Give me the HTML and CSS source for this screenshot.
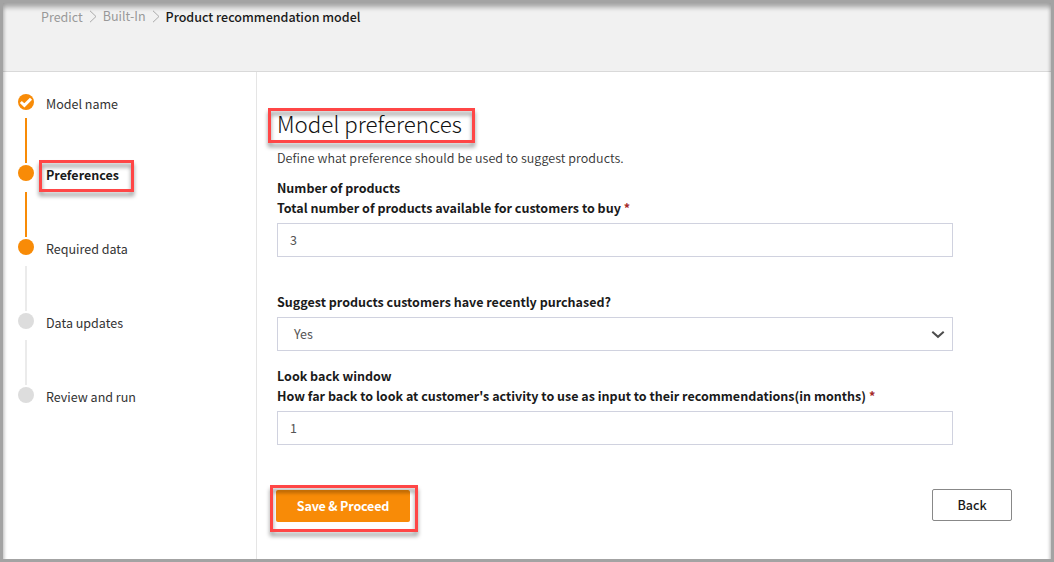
FILE: index.html
```html
<!DOCTYPE html>
<html lang="en">
<head>
<meta charset="utf-8">
<title>Product recommendation model</title>
<link rel="stylesheet" href="styles.css">
</head>
<body>
<div class="window">
  <header class="header">
    <nav class="breadcrumb">
      <a class="crumb crumb-root">Predict</a>
      <svg class="crumb-sep" width="8" height="13" viewBox="0 0 8 13"><path d="M1 .8 7 6.500 1 12.200"/></svg>
      <a class="crumb crumb-mid">Built-In</a>
      <svg class="crumb-sep" width="8" height="13" viewBox="0 0 8 13"><path d="M1 .8 7 6.500 1 12.200"/></svg>
      <span class="crumb-current">Product recommendation model</span>
    </nav>
  </header>
  <div class="body">
    <aside class="sidebar">
      <ol class="steps">
        <li class="step done first">
          <span class="rail"><span class="dot"><svg width="16" height="16" viewBox="0 0 16 16"><path d="M2.800 8 6.400 11.300 13 4.700"/></svg></span><span class="line"></span></span>
          <span class="label">Model name</span>
        </li>
        <li class="step done">
          <span class="rail"><span class="dot"></span><span class="line"></span></span>
          <span class="label current callout callout-step">Preferences</span>
        </li>
        <li class="step done pending-next">
          <span class="rail"><span class="dot"></span><span class="line"></span></span>
          <span class="label">Required data</span>
        </li>
        <li class="step">
          <span class="rail"><span class="dot"></span><span class="line"></span></span>
          <span class="label">Data updates</span>
        </li>
        <li class="step">
          <span class="rail"><span class="dot"></span></span>
          <span class="label">Review and run</span>
        </li>
      </ol>
    </aside>
    <main class="main">
      <h1 class="title"><span class="callout callout-title">Model preferences</span></h1>
      <p class="intro">Define what preference should be used to suggest products.</p>
      <section class="field">
        <div class="field-label">Number of products</div>
        <div class="field-label">Total number of products available for customers to buy <span class="required">*</span></div>
        <div class="input">3</div>
      </section>
      <section class="field field-select">
        <div class="field-label">Suggest products customers have recently purchased?</div>
        <div class="input select">Yes
          <svg class="chevron" width="14" height="9" viewBox="0 0 14 9"><path d="M1.300 1.700 7 6.800 12.700 1.700"/></svg>
        </div>
      </section>
      <section class="field field-window">
        <div class="field-label">Look back window</div>
        <div class="field-label">How far back to look at customer's activity to use as input to their recommendations(in months) <span class="required">*</span></div>
        <div class="input">1</div>
      </section>
      <div class="actions">
        <span class="callout callout-save"><button class="btn primary">Save &amp; Proceed</button></span>
        <button class="btn back">Back</button>
      </div>
    </main>
  </div>
</div>
</body>
</html>
```

FILE: styles.css
```css
*, *::before, *::after { box-sizing: border-box; }

body {
  margin: 0;
  background: #fff;
  color: #333;
  font: 12.53px/20px "Noto Sans CJK SC", "Open Sans", sans-serif;
}

.window {
  position: relative;
  display: flex;
  flex-direction: column;
  width: 1054px;
  height: 562px;
  border: 3px solid #a3a3a3;
  overflow: hidden;
}

/* Soft inner shadow of the window frame */
.window::after {
  content: "";
  position: absolute;
  inset: 0 0 -12px;
  box-shadow: inset 0 5px 4px rgba(0, 0, 0, .25), inset 0 0 4px rgba(0, 0, 0, .2);
  pointer-events: none;
}

.header {
  height: 69px;
  padding: 4px 0 0 38px;
  background: #f1f1f1;
  border-bottom: 1px solid #d9d9d9;
}

.breadcrumb { display: flex; align-items: center; height: 20px; white-space: nowrap; }
.crumb { color: #999; }
.crumb-mid { margin-top: -2px; }
.crumb-sep { margin: -2px 6px 0; fill: none; stroke: #aaa; stroke-width: 1; }
.crumb-current { color: #1a1a1a; font-weight: 500; }

.body { display: flex; flex: 1; }

.sidebar { width: 254px; padding: 22px 0 0 15px; border-right: 1px solid #e5e5e5; }

.steps { margin: 0; padding: 0; list-style: none; }
.step { display: flex; gap: 12px; height: 74px; }
.step.first { height: 71px; }
.rail { display: flex; flex-direction: column; align-items: center; width: 16px; gap: 11px; }
.first .rail { gap: 8px; }
.dot { width: 16px; height: 16px; border-radius: 50%; background: #ddd; }
.dot svg { display: block; fill: none; stroke: #fff; stroke-width: 3; }
.line { width: 2px; height: 45px; background: #ebebeb; }
.done .dot, .done .line { background: #f88b07; }
.pending-next .line { background: #ebebeb; }
.label { height: 20px; }
.current { color: #1a1a1a; font-weight: 700; }

/* Red highlight frames drawn over the content */
.callout { position: relative; }
.callout::after {
  content: "";
  position: absolute;
  border: 3px solid #ff4646;
  filter: drop-shadow(0 4px 2px rgba(0, 0, 0, .42));
  pointer-events: none;
}
.callout-step::after { left: -7px; top: -5px; width: 95px; height: 32px; }
.callout-title::after { left: -9px; top: 1px; width: 207px; height: 35px; }
.callout-save::after { left: -6px; top: -5px; width: 148px; height: 47px; }

.main { flex: 1; padding: 35px 39px 0 20px; }
.title { margin: 0; color: #111; font-size: 22.35px; font-weight: 300; line-height: 32px; }
.callout-title { display: inline-block; }
.intro { margin: 9px 0 10px; font-weight: 350; letter-spacing: .06px; }
.field { width: 676px; }
.field-label { height: 20px; color: #1a1a1a; font-weight: 700; white-space: nowrap; }
.required { color: #a52a2a; }
.input {
  display: flex;
  align-items: center;
  height: 34px;
  margin-top: 5px;
  padding: 0 12px;
  border: 1px solid #d0d2df;
  color: #555;
}
.select { justify-content: space-between; padding: 0 7px 0 16px; }
.chevron { fill: none; stroke: #4d4d4d; stroke-width: 2; }
.field-select { margin-top: 35px; }
.field-window { margin-top: 15px; }

.actions { display: flex; justify-content: space-between; margin: 44px 0 0 -1px; }
.btn { display: block; height: 32px; padding: 0; font: inherit; border-radius: 2px; }
.callout-save { margin-top: 1px; }
.primary { width: 134px; border: 0; background: #f88b07; color: #fff; font-weight: 700; letter-spacing: -.18px; }
.back { width: 80px; border: 1px solid #888; background: #fff; color: #1a1a1a; font-weight: 500; }
```
